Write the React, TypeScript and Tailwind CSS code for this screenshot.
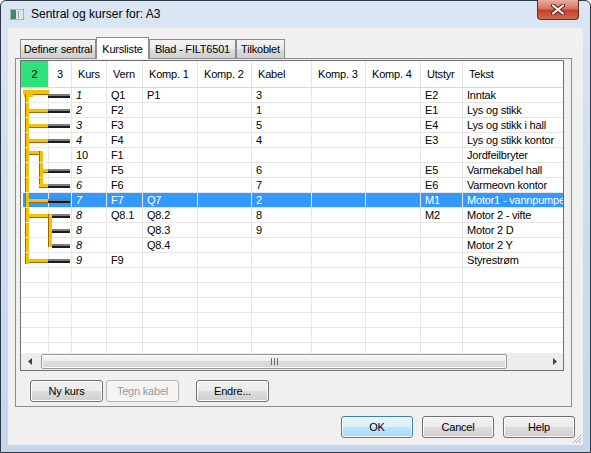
import React from 'react';

type Row = {
  kurs?: string;
  italic?: boolean;
  vern?: string;
  k1?: string;
  kabel?: string;
  utstyr?: string;
  tekst?: string;
  selected?: boolean;
};

const rows: Row[] = [
  { kurs: '1', italic: true, vern: 'Q1', k1: 'P1', kabel: '3', utstyr: 'E2', tekst: 'Inntak' },
  { kurs: '2', italic: true, vern: 'F2', kabel: '1', utstyr: 'E1', tekst: 'Lys og stikk' },
  { kurs: '3', italic: true, vern: 'F3', kabel: '5', utstyr: 'E4', tekst: 'Lys og stikk i hall' },
  { kurs: '4', italic: true, vern: 'F4', kabel: '4', utstyr: 'E3', tekst: 'Lys og stikk kontor' },
  { kurs: '10', vern: 'F1', tekst: 'Jordfeilbryter' },
  { kurs: '5', italic: true, vern: 'F5', kabel: '6', utstyr: 'E5', tekst: 'Varmekabel hall' },
  { kurs: '6', italic: true, vern: 'F6', kabel: '7', utstyr: 'E6', tekst: 'Varmeovn kontor' },
  { kurs: '7', italic: true, vern: 'F7', k1: 'Q7', kabel: '2', utstyr: 'M1', tekst: 'Motor1 - vannpumpe', selected: true },
  { kurs: '8', italic: true, vern: 'Q8.1', k1: 'Q8.2', kabel: '8', utstyr: 'M2', tekst: 'Motor 2 - vifte' },
  { kurs: '8', italic: true, k1: 'Q8.3', kabel: '9', tekst: 'Motor 2 D' },
  { kurs: '8', italic: true, k1: 'Q8.4', tekst: 'Motor 2 Y' },
  { kurs: '9', italic: true, vern: 'F9', tekst: 'Styrestrøm' },
  {}, {}, {}, {}, {}, {},
];

const cols = [
  { key: 't1', label: '2', w: 'w-[28px]' },
  { key: 't2', label: '3', w: 'w-[23px]' },
  { key: 'kurs', label: 'Kurs', w: 'w-[35px]' },
  { key: 'vern', label: 'Vern', w: 'w-[36px]' },
  { key: 'k1', label: 'Komp. 1', w: 'w-[55px]' },
  { key: 'k2', label: 'Komp. 2', w: 'w-[54px]' },
  { key: 'kabel', label: 'Kabel', w: 'w-[60px]' },
  { key: 'k3', label: 'Komp. 3', w: 'w-[54px]' },
  { key: 'k4', label: 'Komp. 4', w: 'w-[55px]' },
  { key: 'utstyr', label: 'Utstyr', w: 'w-[42px]' },
  { key: 'tekst', label: 'Tekst', w: 'w-[120px]' },
];

const Y = '#f5c200';
const YD = '#9a6a00';
const G = '#7c7c7c';
const K = '#1c1c1c';

// tree drawing helpers, coords relative to grid body
function cable(x1: number, yc: number) {
  return (
    <g key={`c${x1}-${yc}`}>
      <rect x={x1} y={yc - 2} width={49 - x1} height={2} fill={G} />
      <rect x={x1} y={yc} width={49 - x1} height={2} fill={K} />
    </g>
  );
}

function hbar(x1: number, x2: number, yc: number) {
  return (
    <g key={`h${x1}-${yc}`}>
      <rect x={x1} y={yc - 2} width={x2 - x1} height={3} fill={Y} />
      <rect x={x1} y={yc + 1} width={x2 - x1} height={1} fill={YD} />
    </g>
  );
}

function vbar(x: number, y1: number, y2: number) {
  return (
    <g key={`v${x}-${y1}`}>
      <rect x={x} y={y1} width={4} height={y2 - y1} fill={Y} />
      <rect x={x} y={y1} width={1} height={y2 - y1} fill={YD} />
    </g>
  );
}

function Tree() {
  const yc = (i: number) => 8 + 15 * i;
  return (
    <svg className="absolute left-0 top-0" width="50" height="180" viewBox="0 0 50 180">
      {/* top feed */}
      <rect x={2} y={2} width={26} height={4} fill={Y} />
      <rect x={3} y={6} width={9} height={3} fill={Y} />
      <rect x={12} y={6} width={15} height={1} fill={YD} />
      {cable(27, yc(0))}
      {vbar(4, 6, 176)}
      {[1, 2, 3, 7, 11].map((i) => (
        <g key={i}>
          {hbar(8, 27, yc(i))}
          {cable(27, yc(i))}
        </g>
      ))}
      {/* jordfeilbryter group */}
      {hbar(8, 22, yc(4) - 3)}
      {vbar(18, yc(4) - 5, yc(6) + 1)}
      {hbar(22, 27, yc(5))}
      {cable(27, yc(5))}
      {hbar(18, 27, yc(6))}
      {cable(27, yc(6))}
      {/* motor 2 group */}
      {hbar(8, 31, yc(8))}
      {vbar(27, yc(8) - 2, yc(10) + 1)}
      {cable(31, yc(8))}
      {cable(31, yc(9))}
      {cable(31, yc(10))}
      {Array.from({ length: 12 }).map((_, k) => (
        <rect key={`g${k}`} x={0} y={14 + 15 * k} width={27} height={1} fill="#ededed" opacity={0.8} />
      ))}
    </svg>
  );
}

function cellValue(r: Row, key: string) {
  switch (key) {
    case 'kurs':
      return r.kurs;
    case 'vern':
      return r.vern;
    case 'k1':
      return r.k1;
    case 'kabel':
      return r.kabel;
    case 'utstyr':
      return r.utstyr;
    case 'tekst':
      return r.tekst;
    default:
      return '';
  }
}

function Grid() {
  return (
    <div className="flex h-[311px] w-[544px] flex-col overflow-hidden border border-[#6f6f6f] bg-white">
      {/* header */}
      <div className="flex h-[27px] shrink-0 border-b border-[#d9d9d9] bg-white">
        {cols.map((c, i) => (
          <div
            key={c.key}
            className={
              c.w +
              ' flex shrink-0 items-center border-r border-[#e3e3e3] pt-[1px] ' +
              (i === 0 ? 'justify-center bg-[#2ee27a] ' : i === 1 ? 'justify-center ' : 'pl-[6px] ')
            }
          >
            {c.label}
          </div>
        ))}
      </div>

      {/* body */}
      <div className="relative flex-1 overflow-hidden">
        {rows.map((r, ri) => (
          <div
            key={ri}
            className={
              'flex h-[15px] border-b border-[#e6e6e6] ' + (r.selected ? 'bg-[#3399ff] text-white' : '')
            }
          >
            {cols.map((c, ci) => (
              <div
                key={c.key}
                className={
                  c.w +
                  ' shrink-0 overflow-hidden whitespace-nowrap border-r border-[#e6e6e6] pl-[4px] leading-[15px] ' +
                  (c.key === 'kurs' && r.italic ? 'italic ' : '') +
                  (ci === 0 && r.selected ? 'border-l-2 border-l-white' : '')
                }
              >
                {cellValue(r, c.key)}
              </div>
            ))}
          </div>
        ))}
        <Tree />
      </div>

      {/* horizontal scrollbar */}
      <div className="flex h-[17px] shrink-0 items-center bg-[#ededed]">
        <div className="flex h-[17px] w-[17px] items-center justify-center">
          <svg width="4" height="7" viewBox="0 0 4 7">
            <path d="M4 0 L0 3.5 L4 7 Z" fill="#404040" />
          </svg>
        </div>
        <div className="ml-[3px] flex h-[15px] w-[466px] items-center justify-center rounded-[2px] border border-[#979797] bg-[linear-gradient(180deg,#f6f6f6_0%,#ececec_50%,#dcdcdc_50%,#d4d4d4_100%)] shadow-[inset_0_0_0_1px_#fafafa]">
          <svg width="7" height="7" viewBox="0 0 7 7">
            <rect x="0" y="0" width="1" height="7" fill="#6a6a6a" />
            <rect x="3" y="0" width="1" height="7" fill="#6a6a6a" />
            <rect x="6" y="0" width="1" height="7" fill="#6a6a6a" />
          </svg>
        </div>
        <div className="ml-auto flex h-[17px] w-[17px] items-center justify-center">
          <svg width="4" height="7" viewBox="0 0 4 7">
            <path d="M0 0 L4 3.5 L0 7 Z" fill="#404040" />
          </svg>
        </div>
      </div>
    </div>
  );
}

function Button({
  children,
  w,
  disabled,
  primary,
}: {
  children: React.ReactNode;
  w: string;
  disabled?: boolean;
  primary?: boolean;
}) {
  let cls =
    'flex h-[22px] items-center justify-center rounded-[3px] border shadow-[inset_0_0_0_1px_#fbfbfb] ' + w + ' ';
  if (disabled) {
    cls += 'border-[#adb2b5] bg-[#f4f4f4] text-[#9a9a9a]';
  } else if (primary) {
    cls +=
      'border-[#3c7fb1] bg-[linear-gradient(180deg,#eaf6fd_0%,#d9f0fc_50%,#bee6fd_50%,#a7d9f5_100%)] shadow-[inset_0_0_0_1px_#c6e6f8]';
  } else {
    cls += 'border-[#707070] bg-[linear-gradient(180deg,#f2f2f2_0%,#ebebeb_50%,#dddddd_50%,#cfcfcf_100%)]';
  }
  return <div className={cls}>{children}</div>;
}

function Tab({ label, w, selected }: { label: string; w: string; selected?: boolean }) {
  if (selected) {
    return (
      <div
        className={
          w +
          ' relative z-10 -mb-px flex h-[22px] shrink-0 items-start justify-center border border-b-0 border-[#898c95] bg-white pt-[3px]'
        }
      >
        {label}
      </div>
    );
  }
  return (
    <div
      className={
        w +
        ' flex h-[19px] shrink-0 items-center justify-center border border-b-0 border-[#898c95] bg-[linear-gradient(180deg,#f3f3f3_0%,#ebebeb_50%,#dddddd_50%,#cfcfcf_100%)]'
      }
    >
      {label}
    </div>
  );
}

export default function App() {
  return (
    <div className="h-[453px] w-[591px] bg-white font-['Liberation_Sans',Arial,sans-serif] text-[11px] tracking-[-0.2px] text-black">
      <div className="flex h-full w-full flex-col rounded-t-[6px] border border-[#2f3946] bg-[linear-gradient(180deg,#dae6f4_0%,#cddef0_40%,#c3d6ec_100%)]">
        {/* title bar */}
        <div className="flex h-[27px] shrink-0 items-start">
          <div className="flex h-[26px] items-center pl-[9px]">
            <svg width="14" height="11" viewBox="0 0 14 11">
              <rect x="0" y="0" width="14" height="11" fill="#e4e4e4" stroke="#7a7a7a" strokeWidth="1" />
              <rect x="1" y="1" width="5" height="9" fill="#3a8a72" />
              <rect x="8" y="2" width="1" height="7" fill="#9a9a9a" />
            </svg>
            <span className="ml-[7px] text-[12px] tracking-normal">Sentral og kurser for: A3</span>
          </div>
          <div className="-mt-px ml-auto mr-[11px] flex h-[20px] w-[42px] items-center justify-center rounded-b-[4px] border border-t-0 border-[#6e2a22] bg-[linear-gradient(180deg,#e9ada2_0%,#d6725f_45%,#c4402c_55%,#cf6a52_100%)]">
            <svg width="14" height="11" viewBox="0 0 14 11">
              <path d="M2 1.5 L12 9.5 M12 1.5 L2 9.5" stroke="#5a1a12" strokeWidth="4" strokeLinecap="round" />
              <path d="M2 1.5 L12 9.5 M12 1.5 L2 9.5" stroke="#ffffff" strokeWidth="2.2" strokeLinecap="round" />
            </svg>
          </div>
        </div>

        {/* client area */}
        <div className="relative ml-[7px] h-[417px] w-[575px] bg-[#f0f0f0] pl-[7px] pt-[9px]">
          {/* tabs */}
          <div className="flex h-[21px] items-end pl-[5px]">
            <Tab label="Definer sentral" w="w-[76px]" />
            <Tab label="Kursliste" w="w-[53px]" selected />
            <Tab label="Blad - FILT6501" w="w-[87px]" />
            <Tab label="Tilkoblet" w="w-[49px]" />
          </div>

          {/* tab page */}
          <div className="h-[349px] w-[557px] border border-[#898c95] bg-[#f0f0f0] pl-[4px] pt-[1px]">
            <Grid />
            <div className="ml-[10px] mt-[9px] flex">
              <Button w="w-[73px]">Ny kurs</Button>
              <div className="ml-[3px]">
                <Button w="w-[73px]" disabled>
                  Tegn kabel
                </Button>
              </div>
              <div className="ml-[17px]">
                <Button w="w-[73px]">Endre...</Button>
              </div>
            </div>
          </div>

          {/* dialog buttons */}
          <div className="mt-[9px] flex justify-end gap-[9px] pr-[8px]">
            <Button w="w-[72px]" primary>
              OK
            </Button>
            <Button w="w-[72px]">Cancel</Button>
            <Button w="w-[72px]">Help</Button>
          </div>

          {/* size grip */}
          <svg className="absolute bottom-[1px] right-[1px]" width="10" height="10" viewBox="0 0 10 10">
            <path d="M9 1 L1 9 M9 4 L4 9 M9 7 L7 9" stroke="#b0b0b0" strokeWidth="1" />
          </svg>
        </div>
      </div>
    </div>
  );
}
